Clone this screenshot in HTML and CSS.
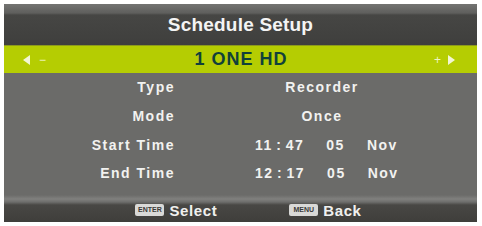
FILE: index.html
```html
<!DOCTYPE html>
<html lang="en">
<head>
    <meta charset="UTF-8">
    <title>Schedule Setup</title>
    <link rel="stylesheet" href="styles.css">
</head>
<body>
    <div class="panel">
        <div class="title-bar">Schedule Setup</div>

        <div class="channel-bar">
            <span class="nav nav-left"><span class="tri tri-left"></span><span class="sign">&minus;</span></span>
            <span class="channel-name">1 ONE HD</span>
            <span class="nav nav-right"><span class="sign">+</span><span class="tri tri-right"></span></span>
        </div>

        <div class="settings">
            <div class="row">
                <span class="label">Type</span>
                <span class="value">Recorder</span>
            </div>
            <div class="row">
                <span class="label">Mode</span>
                <span class="value">Once</span>
            </div>
            <div class="row">
                <span class="label">Start Time</span>
                <span class="value time"><span class="clock">11 : 47</span><span>05</span><span>Nov</span></span>
            </div>
            <div class="row">
                <span class="label">End Time</span>
                <span class="value time"><span class="clock">12 : 17</span><span>05</span><span>Nov</span></span>
            </div>
        </div>

        <div class="footer">
            <span class="hint"><span class="key">ENTER</span>Select</span>
            <span class="hint"><span class="key">MENU</span>Back</span>
        </div>
    </div>
</body>
</html>
```

FILE: styles.css
```css
body {
    margin: 0;
    background-color: #fff;
    font-family: "Liberation Sans", Arial, sans-serif;
    font-weight: bold;
}
.panel {
    width: 473px;
    margin: 4px 0 0 4px;
    display: flex;
    flex-direction: column;
}
.title-bar {
    height: 41px;
    display: flex;
    align-items: center;
    justify-content: center;
    background: linear-gradient(#747472 0, #5f5f5d 9px, #464644 11px, #3f3f3d 100%);
    color: #f4f4f4;
    font-size: 19px;
    letter-spacing: 0.2px;
    padding-top: 1px;
    box-sizing: border-box;
}
.channel-bar {
    height: 28px;
    display: flex;
    align-items: center;
    justify-content: space-between;
    padding: 0 22px 0 19px;
    background-color: #b5cd02;
    border-top: 1px solid #8d9a1c;
    box-sizing: border-box;
}
.channel-name {
    color: #10403a;
    font-size: 18px;
    letter-spacing: 1px;
    margin-left: 4px;
}
.nav {
    display: flex;
    align-items: center;
    gap: 9px;
    color: #eef4c4;
    font-size: 12px;
    font-weight: normal;
    width: 26px;
}
.nav-right {
    justify-content: flex-end;
    gap: 7px;
}
.tri {
    width: 0;
    height: 0;
    border-top: 5px solid transparent;
    border-bottom: 5px solid transparent;
}
.tri-left {
    border-right: 7px solid #f2f6d4;
}
.tri-right {
    border-left: 7px solid #f2f6d4;
}
.settings {
    background-color: #6b6b69;
    padding: 0 0 7px 0;
}
.row {
    height: 28.7px;
    display: grid;
    grid-template-columns: 171px 1fr;
    align-items: center;
    color: #f2f2f0;
    font-size: 14px;
    letter-spacing: 1.5px;
}
.label {
    text-align: right;
}
.value {
    text-align: center;
    padding-right: 8px;
}
.time {
    display: flex;
    gap: 22px;
    padding-left: 80px;
    text-align: left;
}
.time .clock {
    word-spacing: -2px;
}
.footer {
    height: 27px;
    display: flex;
    align-items: flex-end;
    justify-content: center;
    gap: 72px;
    padding: 0 0 3px 16px;
    box-sizing: border-box;
    background: linear-gradient(#6b6b69 0, #80807e 4px, #6e6e6c 7px, #484744 10px, #3f3e3b 100%);
}
.hint {
    display: flex;
    align-items: center;
    gap: 5px;
    color: #f0f0ee;
    font-size: 15px;
    letter-spacing: 0.6px;
}
.key {
    width: 29px;
    height: 12px;
    line-height: 12px;
    text-align: center;
    background-color: #d9d9d7;
    color: #3a3a38;
    font-size: 7px;
    letter-spacing: 0;
    border-radius: 2px;
}
```
